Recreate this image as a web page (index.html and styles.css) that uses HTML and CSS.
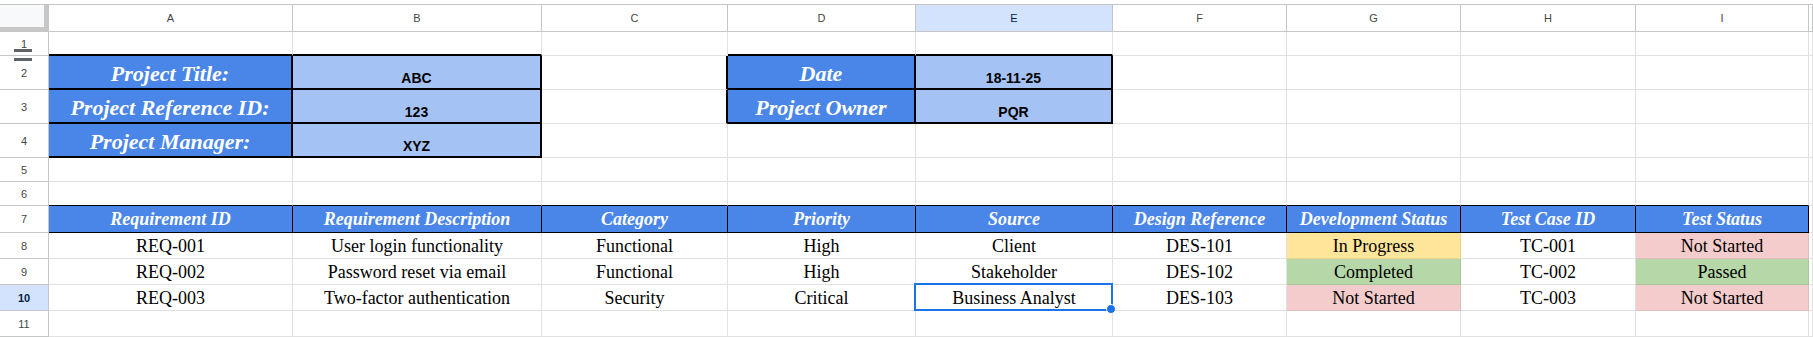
FILE: index.html
```html
<!DOCTYPE html>
<html>
<head>
<meta charset="utf-8">
<link rel="stylesheet" href="styles.css">
</head>
<body>
<div class="sheet">
  <div class="corner"></div>
  <div class="ch">A</div><div class="ch">B</div><div class="ch">C</div><div class="ch">D</div><div class="ch sel">E</div><div class="ch">F</div><div class="ch">G</div><div class="ch">H</div><div class="ch">I</div><div class="ch"></div>

  <div class="rh">1<span class="frz"></span></div>
  <div class="bk-b"></div><div class="bk-b"></div><div></div><div class="bk-b"></div><div class="bk-b"></div><div></div><div></div><div></div><div></div><div></div>

  <div class="rh">2</div>
  <div class="lbl bk-b bk-r">Project Title:</div><div class="val bk-b bk-r">ABC</div><div class="bk-r"></div><div class="lbl bk-b bk-r">Date</div><div class="val bk-b bk-r">18-11-25</div><div></div><div></div><div></div><div></div><div></div>

  <div class="rh">3</div>
  <div class="lbl bk-b bk-r">Project Reference ID:</div><div class="val bk-b bk-r">123</div><div class="bk-r"></div><div class="lbl bk-b bk-r">Project Owner</div><div class="val bk-b bk-r">PQR</div><div></div><div></div><div></div><div></div><div></div>

  <div class="rh">4</div>
  <div class="lbl bk-b bk-r">Project Manager:</div><div class="val bk-b bk-r">XYZ</div><div></div><div></div><div></div><div></div><div></div><div></div><div></div><div></div>

  <div class="rh">5</div>
  <div></div><div></div><div></div><div></div><div></div><div></div><div></div><div></div><div></div><div></div>

  <div class="rh">6</div>
  <div class="topk"></div><div class="topk"></div><div class="topk"></div><div class="topk"></div><div class="topk"></div><div class="topk"></div><div class="topk"></div><div class="topk"></div><div class="topk"></div><div></div>

  <div class="rh">7</div>
  <div class="th">Requirement ID</div><div class="th">Requirement Description</div><div class="th">Category</div><div class="th">Priority</div><div class="th">Source</div><div class="th">Design Reference</div><div class="th">Development Status</div><div class="th">Test Case ID</div><div class="th">Test Status</div><div></div>

  <div class="rh">8</div>
  <div class="td">REQ-001</div><div class="td">User login functionality</div><div class="td">Functional</div><div class="td">High</div><div class="td">Client</div><div class="td">DES-101</div><div class="td prog">In Progress</div><div class="td">TC-001</div><div class="td notst">Not Started</div><div></div>

  <div class="rh">9</div>
  <div class="td">REQ-002</div><div class="td">Password reset via email</div><div class="td">Functional</div><div class="td">High</div><div class="td">Stakeholder</div><div class="td">DES-102</div><div class="td done">Completed</div><div class="td">TC-002</div><div class="td done">Passed</div><div></div>

  <div class="rh sel">10</div>
  <div class="td">REQ-003</div><div class="td">Two-factor authentication</div><div class="td">Security</div><div class="td">Critical</div><div class="td selcell">Business Analyst<span class="handle"></span></div><div class="td">DES-103</div><div class="td notst">Not Started</div><div class="td">TC-003</div><div class="td notst">Not Started</div><div></div>

  <div class="rh">11</div>
  <div></div><div></div><div></div><div></div><div></div><div></div><div></div><div></div><div></div><div></div>
</div>
</body>
</html>
```

FILE: styles.css
```css
html, body {
  margin: 0;
  background: #ffffff;
}
body {
  padding-top: 4px;
  font-family: "Liberation Sans", Arial, sans-serif;
  overflow: hidden;
}
.sheet {
  display: grid;
  grid-template-columns: 49px 244px 249px 186px 188px 197px 174px 174px 175px 173px 1fr;
  grid-template-rows: 27px 24px 34px 34px 34px 24px 24px 27px 26px 26px 26px 26px;
  border-top: 1px solid #c4c7c5;
}
.sheet > div {
  box-sizing: border-box;
  border-right: 1px solid #e1e1e1;
  border-bottom: 1px solid #e1e1e1;
  display: flex;
  justify-content: center;
  align-items: flex-end;
  white-space: nowrap;
  min-width: 0;
}
.sheet > .corner {
  background: #f8f9fa;
  border-right: 5px solid #c7c7c7;
  border-bottom: 5px solid #c7c7c7;
}
.sheet > .ch {
  align-items: center;
  border-right-color: #c4c7c5;
  border-bottom-color: #c4c7c5;
  font-size: 11px;
  color: #444746;
}
.sheet > .ch.sel {
  background: #d3e3fd;
  color: #041e49;
}
.sheet > .rh {
  position: relative;
  align-items: center;
  border-right-color: #c4c7c5;
  border-bottom-color: #c4c7c5;
  font-size: 11px;
  color: #444746;
}
.sheet > .rh.sel {
  background: #d3e3fd;
  color: #041e49;
  font-weight: bold;
}
.frz {
  position: absolute;
  left: 14px;
  top: 17px;
  width: 18px;
  height: 3px;
  background: #5f6368;
  box-shadow: 0 9px 0 #5f6368;
}
.sheet > .lbl {
  background: #4a86e8;
  color: #ffffff;
  font-family: "Liberation Serif", serif;
  font-style: italic;
  font-weight: bold;
  font-size: 22px;
  padding-bottom: 1px;
}
.sheet > .val {
  background: #a4c2f4;
  color: #000000;
  font-weight: bold;
  font-size: 14px;
  padding-bottom: 2px;
}
.sheet > .bk-b {
  border-bottom: 2px solid #000000;
}
.sheet > .bk-r {
  border-right: 2px solid #000000;
}
.sheet > .topk {
  border-bottom: 1px solid #000000;
}
.sheet > .th {
  background: #4a86e8;
  color: #ffffff;
  font-family: "Liberation Serif", serif;
  font-style: italic;
  font-weight: bold;
  font-size: 18px;
  border-right: 1px solid #000000;
  border-bottom: 1px solid #000000;
  padding-bottom: 2px;
}
.sheet > .td {
  font-family: "Liberation Serif", serif;
  font-size: 18px;
  color: #000000;
  padding-bottom: 1px;
}
.sheet > .prog {
  background: #ffe599;
  border-color: rgba(0, 0, 0, 0.08);
}
.sheet > .done {
  background: #b6d7a8;
  border-color: rgba(0, 0, 0, 0.08);
}
.sheet > .notst {
  background: #f4cccc;
  border-color: rgba(0, 0, 0, 0.08);
}
.sheet > .selcell {
  position: relative;
}
.selcell::after {
  content: "";
  position: absolute;
  top: -2px;
  left: -2px;
  right: -1px;
  bottom: -1px;
  border: 2px solid #1a73e8;
}
.handle {
  position: absolute;
  right: -4px;
  bottom: -4px;
  width: 8px;
  height: 8px;
  border-radius: 50%;
  background: #1a73e8;
  border: 1px solid #ffffff;
  z-index: 2;
}
```
